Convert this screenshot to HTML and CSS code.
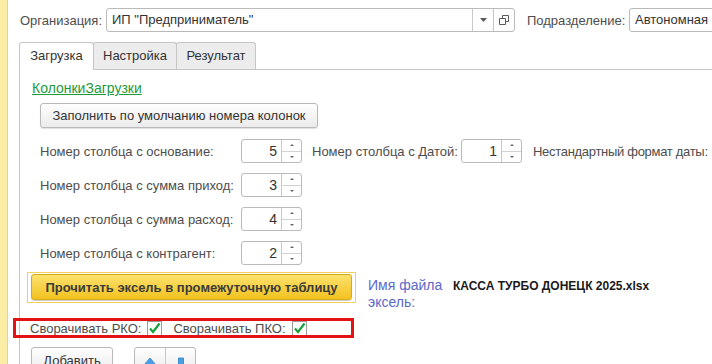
FILE: index.html
```html
<!DOCTYPE html>
<html lang="ru">
<head>
    <meta charset="UTF-8">
    <meta name="viewport" content="width=device-width, initial-scale=1.0">
    <title>Загрузка кассы из Excel</title>
    <link rel="stylesheet" href="styles.css">
</head>
<body>
<div class="page">
    <div class="strip"></div>
    <div class="main">

        <!-- Организация / подразделение -->
        <div class="top-row">
            <span class="caption caption-org">Организация:</span>
            <div class="field org-field">
                <span class="field-value">ИП "Предприниматель"</span>
                <span class="field-btn">
                    <svg width="7" height="4" viewBox="0 0 7 4"><path d="M0 0H7L3.5 4Z" fill="#5a5a5a"/></svg>
                </span>
                <span class="field-btn">
                    <svg width="10" height="10" viewBox="0 0 10 10">
                        <path d="M3.5 0.5H9.5V6.5H3.5Z" fill="none" stroke="#5a5a5a"/>
                        <path d="M0.5 3.5H6.5V9.5H0.5Z" fill="#fff" stroke="#5a5a5a"/>
                    </svg>
                </span>
            </div>
            <span class="caption caption-dept">Подразделение:</span>
            <div class="field dept-field">
                <span class="field-value">Автономная территория</span>
            </div>
        </div>

        <!-- Закладки -->
        <div class="tabs">
            <div class="tab tab-load active">Загрузка</div>
            <div class="tab tab-settings">Настройка</div>
            <div class="tab tab-result">Результат</div>
        </div>

        <div class="panel">
            <div class="group-title">КолонкиЗагрузки</div>
            <button class="btn fill-btn">Заполнить по умолчанию номера колонок</button>

            <div class="col-rows">
                <div class="row">
                    <span class="row-label">Номер столбца с основание:</span>
                    <div class="spin"><span class="spin-value">5</span><span class="spin-btns"><span class="spin-up"></span><span class="spin-down"></span></span></div>
                    <span class="date-label">Номер столбца с Датой:</span>
                    <div class="spin"><span class="spin-value">1</span><span class="spin-btns"><span class="spin-up"></span><span class="spin-down"></span></span></div>
                    <span class="fmt-label">Нестандартный формат даты:</span>
                </div>
                <div class="row">
                    <span class="row-label">Номер столбца с сумма приход:</span>
                    <div class="spin"><span class="spin-value">3</span><span class="spin-btns"><span class="spin-up"></span><span class="spin-down"></span></span></div>
                </div>
                <div class="row">
                    <span class="row-label">Номер столбца с сумма расход:</span>
                    <div class="spin"><span class="spin-value">4</span><span class="spin-btns"><span class="spin-up"></span><span class="spin-down"></span></span></div>
                </div>
                <div class="row">
                    <span class="row-label">Номер столбца с контрагент:</span>
                    <div class="spin"><span class="spin-value">2</span><span class="spin-btns"><span class="spin-up"></span><span class="spin-down"></span></span></div>
                </div>
            </div>

            <div class="read-row">
                <div class="read-frame">
                    <button class="read-btn">Прочитать эксель в промежуточную таблицу</button>
                </div>
                <span class="file-label">Имя файла эксель:</span>
                <span class="file-name">КАССА ТУРБО ДОНЕЦК 2025.xlsx</span>
            </div>

            <div class="check-row">
                <span>Сворачивать РКО:</span>
                <span class="check">
                    <svg width="13" height="13" viewBox="0 0 13 13"><path d="M2 6.5L5 10L11.5 1.5" fill="none" stroke="#16a03c" stroke-width="2.2"/></svg>
                </span>
                <span class="check-label">Сворачивать ПКО:</span>
                <span class="check">
                    <svg width="13" height="13" viewBox="0 0 13 13"><path d="M2 6.5L5 10L11.5 1.5" fill="none" stroke="#16a03c" stroke-width="2.2"/></svg>
                </span>
                <div class="mark"></div>
            </div>

            <div class="bottom-row">
                <button class="btn add-btn">Добавить</button>
                <div class="move-group">
                    <span class="move-btn">
                        <svg width="14" height="16" viewBox="0 0 14 16"><path d="M7 1L13 8H9.5V15H4.5V8H1Z" fill="#4aa0e2" stroke="#2b7fc4" stroke-width="0.8"/></svg>
                    </span>
                    <span class="move-btn">
                        <svg width="14" height="16" viewBox="0 0 14 16"><path d="M7 15L13 8H9.5V1H4.5V8H1Z" fill="#4aa0e2" stroke="#2b7fc4" stroke-width="0.8"/></svg>
                    </span>
                </div>
            </div>
        </div>

    </div>
</div>
</body>
</html>
```

FILE: styles.css
```css
* {
    box-sizing: border-box;
}
html, body {
    margin: 0;
    height: 100%;
}
body {
    font-family: "Liberation Sans", Arial, sans-serif;
    font-size: 13px;
    color: #4d4d4d;
    background-color: #fff;
    overflow: hidden;
}
.page {
    display: flex;
    height: 100vh;
}
.strip {
    width: 8px;
    flex: none;
    background-color: #fbeca6;
    border-right: 1px solid #e6d58c;
}
.main {
    flex: 1;
    min-width: 0;
    padding-left: 11px;
}

/* верхняя строка */
.top-row {
    display: flex;
    align-items: center;
    height: 24px;
    margin-top: 8px;
    white-space: nowrap;
}
.caption {
    flex: none;
}
.caption-org {
    width: 86px;
    margin-left: 1px;
}
.caption-dept {
    width: 102px;
    margin-left: 12px;
}
.field {
    display: flex;
    align-items: stretch;
    height: 24px;
    border: 1px solid #bababa;
    border-radius: 3px;
    background-color: #fff;
    color: #333;
    flex: none;
}
.field-value {
    flex: 1;
    padding-left: 5px;
    line-height: 22px;
    overflow: hidden;
}
.org-field {
    width: 409px;
}
.dept-field {
    width: 300px;
}
.field-btn {
    width: 21px;
    display: flex;
    align-items: center;
    justify-content: center;
    border-left: 1px solid #c8c8c8;
}

/* закладки */
.tabs {
    display: flex;
    align-items: flex-start;
    margin-top: 10px;
}
.tab {
    height: 27px;
    line-height: 26px;
    text-align: center;
    color: #333;
    background-color: #ececec;
    border: 1px solid #c6c6c6;
    border-bottom: none;
    border-radius: 3px 3px 0 0;
    margin-right: -1px;
}
.tab.active {
    position: relative;
    z-index: 1;
    height: 28px;
    margin-bottom: -1px;
    background-color: #fff;
}
.tab-load {
    width: 75px;
}
.tab-settings {
    width: 84px;
}
.tab-result {
    width: 80px;
}
.panel {
    border-top: 1px solid #c6c6c6;
    border-left: 1px solid #c6c6c6;
    padding: 9px 0 0 11px;
    height: 400px;
}

.group-title {
    margin-left: 1px;
    font-size: 14px;
    line-height: 18px;
    color: #1f9a3a;
    text-decoration: underline;
}

.btn {
    display: block;
    height: 25px;
    padding: 0;
    font-family: inherit;
    font-size: 13px;
    color: #333;
    border: 1px solid #b9b9b9;
    border-radius: 3px;
    background: linear-gradient(#fefefe, #ebebeb);
    box-shadow: 0 1px 1px rgba(0, 0, 0, 0.12);
}
.fill-btn {
    width: 278px;
    margin: 6px 0 0 9px;
}

/* колонки */
.col-rows {
    display: flex;
    flex-direction: column;
    gap: 10px;
    margin: 11px 0 0 9px;
}
.row {
    display: flex;
    align-items: center;
    height: 24px;
    white-space: nowrap;
}
.row-label {
    width: 201px;
    flex: none;
}
.spin {
    display: flex;
    width: 61px;
    height: 24px;
    border: 1px solid #bababa;
    border-radius: 3px;
    color: #333;
    flex: none;
}
.spin-value {
    flex: 1;
    text-align: right;
    padding-right: 4px;
    font-size: 14px;
    line-height: 22px;
}
.spin-btns {
    width: 20px;
    display: flex;
    flex-direction: column;
    border-left: 1px solid #c8c8c8;
}
.spin-up, .spin-down {
    flex: 1;
    display: flex;
    align-items: center;
    justify-content: center;
}
.spin-up {
    border-bottom: 1px solid #d2d2d2;
}
.spin-up::after, .spin-down::after {
    content: "";
    border-left: 2px solid transparent;
    border-right: 2px solid transparent;
}
.spin-up::after {
    border-bottom: 2px solid #666;
}
.spin-down::after {
    border-top: 2px solid #666;
}
.date-label {
    width: 149px;
    flex: none;
    margin-left: 10px;
}
.fmt-label {
    flex: none;
    margin-left: 11px;
    letter-spacing: -0.3px;
}

/* чтение файла */
.read-row {
    display: flex;
    align-items: flex-start;
    margin: 7px 0 0 -4px;
    white-space: nowrap;
}
.read-frame {
    width: 329px;
    height: 31px;
    flex: none;
    padding: 1px 3px 2px 3px;
    border: 1px solid #f1d060;
}
.read-btn {
    width: 100%;
    height: 26px;
    padding: 0;
    font-family: inherit;
    font-size: 13px;
    font-weight: bold;
    color: #3b3b3b;
    border: 1px solid #d6ab16;
    border-radius: 3px;
    background: linear-gradient(#fde26e, #f2c21f);
    box-shadow: 0 1px 1px rgba(0, 0, 0, 0.2);
}
.file-label {
    width: 78px;
    flex: none;
    margin-left: 12px;
    padding-top: 5px;
    font-size: 14px;
    line-height: 17px;
    color: #5c68c9;
    white-space: normal;
}
.file-name {
    margin-left: 7px;
    padding-top: 6px;
    font-size: 12px;
    font-weight: bold;
    line-height: 17px;
    color: #1a1a1a;
}

/* флажки */
.check-row {
    position: relative;
    display: flex;
    align-items: center;
    height: 16px;
    margin: 9px 0 0 -1px;
    white-space: nowrap;
}
.check {
    width: 15px;
    height: 15px;
    flex: none;
    margin-left: 6px;
    border: 1px solid #9c9c9c;
    display: flex;
    align-items: center;
    justify-content: center;
    background-color: #fff;
}
.check-label {
    margin-left: 11px;
}
.mark {
    position: absolute;
    left: -17px;
    top: -2px;
    width: 341px;
    height: 20px;
    border: 3px solid #e41212;
}

/* кнопки внизу */
.bottom-row {
    display: flex;
    align-items: flex-start;
    margin-top: 11px;
}
.add-btn {
    width: 82px;
    height: 27px;
}
.move-group {
    display: flex;
    margin-left: 21px;
    height: 27px;
    border: 1px solid #b9b9b9;
    border-radius: 3px;
    background: linear-gradient(#fefefe, #ebebeb);
}
.move-btn {
    width: 30px;
    display: flex;
    justify-content: center;
    padding-top: 9px;
}
.move-btn + .move-btn {
    border-left: 1px solid #c8c8c8;
}
```
